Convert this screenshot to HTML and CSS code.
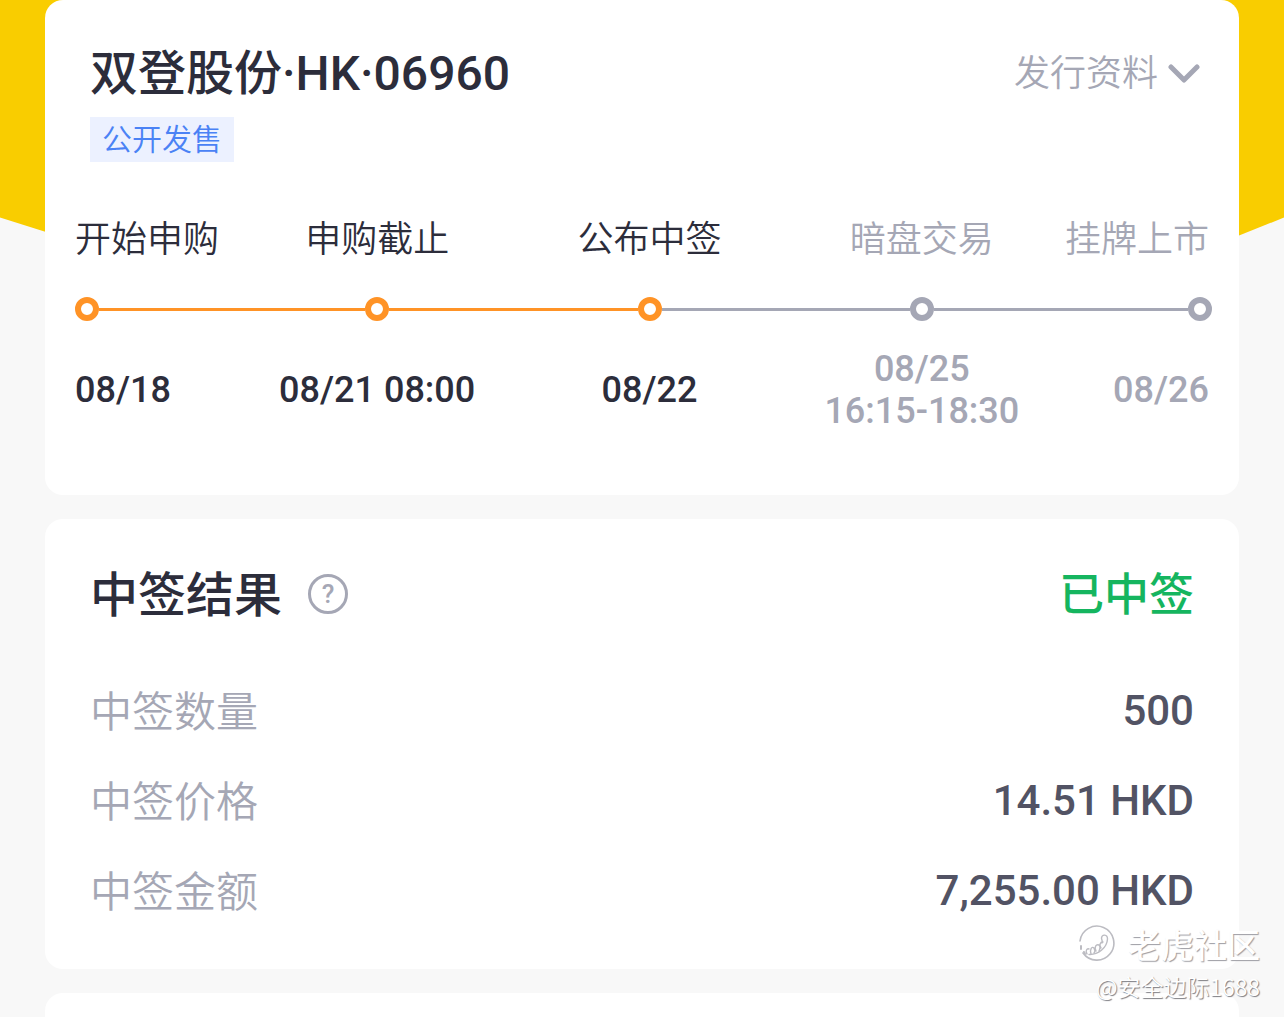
FILE: index.html
```html
<!DOCTYPE html>
<html lang="zh-CN">
<head>
    <meta charset="UTF-8">
    <meta name="viewport" content="width=device-width, initial-scale=1.0">
    <title>双登股份·HK·06960</title>
    <link rel="stylesheet" href="styles.css">
</head>
<body>
    <div class="backdrop"></div>
    <main class="page">
        <section class="card stock">
            <div class="card-head">
                <h1>双登股份·HK·06960</h1>
                <button type="button" class="more">
                    发行资料
                    <svg class="chevron" width="32" height="22" viewBox="0 0 32 22">
                        <path d="M3 4 L16 17 L29 4" fill="none" stroke="currentColor" stroke-width="5" stroke-linecap="round" stroke-linejoin="round"/>
                    </svg>
                </button>
            </div>
            <span class="tag">公开发售</span>

            <ol class="timeline">
                <li class="step done">
                    <span class="step-name">开始申购</span>
                    <span class="track"><i class="dot"></i><i class="line"></i></span>
                    <span class="step-date">08/18</span>
                </li>
                <li class="step done">
                    <span class="step-name">申购截止</span>
                    <span class="track"><i class="line"></i><i class="dot"></i><i class="line"></i></span>
                    <span class="step-date">08/21 08:00</span>
                </li>
                <li class="step done current">
                    <span class="step-name">公布中签</span>
                    <span class="track"><i class="line"></i><i class="dot"></i><i class="line"></i></span>
                    <span class="step-date">08/22</span>
                </li>
                <li class="step">
                    <span class="step-name">暗盘交易</span>
                    <span class="track"><i class="line"></i><i class="dot"></i><i class="line"></i></span>
                    <span class="step-date">08/25<br>16:15-18:30</span>
                </li>
                <li class="step">
                    <span class="step-name">挂牌上市</span>
                    <span class="track"><i class="line"></i><i class="dot"></i></span>
                    <span class="step-date">08/26</span>
                </li>
            </ol>
        </section>

        <section class="card result">
            <div class="card-head">
                <div class="title-group">
                    <h2>中签结果</h2>
                    <button type="button" class="help">?</button>
                </div>
                <strong class="status">已中签</strong>
            </div>
            <dl class="details">
                <div class="row">
                    <dt>中签数量</dt>
                    <dd>500</dd>
                </div>
                <div class="row">
                    <dt>中签价格</dt>
                    <dd>14.51 HKD</dd>
                </div>
                <div class="row">
                    <dt>中签金额</dt>
                    <dd>7,255.00 HKD</dd>
                </div>
            </dl>
        </section>

        <section class="card next"></section>
    </main>

    <div class="watermark">
        <div class="brand">
            <svg class="brand-logo" width="38" height="38" viewBox="0 0 38 38" fill="none" stroke="currentColor" stroke-linecap="round" stroke-linejoin="round">
                <path d="M2 16 A17 17 0 1 1 5 28" stroke-width="1.6"/>
                <path d="M3 21 L3 24 M6 27 L7 29" stroke-width="2"/>
                <path d="M11 29.5 C20 30 29 23 29.500 14 C29.500 9 24 9 23.500 13 C23.500 15 25 16 24 18" stroke-width="1.400"/>
                <path d="M9 29 C7 26 9 23 11 24 M13 29 C11.500 24 14 21 16 23 C17 25 17 27 16 28 M18 26 C16 22 18 19 21 20 C23 22 22 24 21 26 M23 23 C21 20 22 17 25 17" stroke-width="1.400"/>
            </svg>
            <span>老虎社区</span>
        </div>
        <div class="author">@安全边际1688</div>
    </div>
</body>
</html>
```

FILE: styles.css
```css
* {
    box-sizing: border-box;
}
body {
    margin: 0;
    min-height: 100vh;
    background: #f8f8f8;
    color: #2c2d3b;
    font-family: Roboto, "Noto Sans CJK SC", sans-serif;
    overflow: hidden;
}
h1, h2, ol, dl, dd {
    margin: 0;
    padding: 0;
}
button {
    padding: 0;
    border: none;
    background: none;
    color: #a5a7b5;
    font-family: inherit;
    cursor: pointer;
}

/* yellow header shape behind the cards */
.backdrop {
    position: absolute;
    top: 0;
    left: 0;
    right: 0;
    height: 444px;
    background: #f9cd00;
    clip-path: polygon(0 0, 100% 0, 100% 49%, 56% 100%, 0 49%);
}
.page {
    position: relative;
    display: flex;
    flex-direction: column;
    gap: 24px;
    height: 100vh;
    padding: 0 45px;
}
.card {
    flex-shrink: 0;
    padding: 45px;
    background: white;
    border-radius: 18px;
}
.card-head {
    display: flex;
    justify-content: space-between;
    align-items: center;
}
h1, h2 {
    font-size: 48px;
    line-height: 56px;
    font-weight: 500;
}

/* stock card */
.stock {
    padding: 46px 27px 63px 30px;
}
.stock .card-head {
    padding: 0 12px 0 15px;
}
.more {
    display: flex;
    align-items: center;
    gap: 10px;
    font-size: 36px;
    line-height: 56px;
    font-weight: 350;
}
.tag {
    display: block;
    width: max-content;
    margin: 15px 0 0 15px;
    padding: 0 12px;
    background: #ecf1ff;
    color: #4a82f5;
    font-size: 30px;
    line-height: 45px;
    font-weight: 350;
}

.timeline {
    display: grid;
    grid-template-columns: 166px repeat(3, 1fr) 154px;
    margin-top: 57px;
    list-style: none;
    font-size: 36px;
    line-height: 42px;
}
.step {
    display: flex;
    flex-direction: column;
    color: #a5a7b5;
    text-align: center;
}
.step.done {
    color: #2c2d3b;
}
.step:first-child {
    text-align: left;
}
.step:last-child {
    text-align: right;
}
.step:last-child .step-name,
.step:last-child .step-date {
    padding-right: 3px;
}
.step-name {
    font-weight: 350;
}
.track {
    display: flex;
    align-items: center;
    margin: 36px 0 27px;
}
.dot {
    width: 24px;
    height: 24px;
    border: 6px solid #a5a7b5;
    border-radius: 50%;
}
.line {
    flex: 1;
    height: 3px;
    background: #a5a7b5;
}
.done .dot {
    border-color: #ff9326;
}
.done .line {
    background: #ff9326;
}
.current .dot + .line {
    background: #a5a7b5;
}
.step-date {
    display: flex;
    flex: 1;
    flex-direction: column;
    justify-content: center;
    font-weight: 500;
}

/* result card */
.result {
    padding-bottom: 33px;
}
.title-group {
    display: flex;
    align-items: center;
    gap: 26px;
}
h2, .status {
    padding-top: 4px;
}
.help {
    width: 40px;
    height: 40px;
    border: 3px solid #a5a7b5;
    border-radius: 50%;
    font-size: 26px;
    line-height: 34px;
    font-weight: 500;
}
.status {
    color: #15b55f;
    font-size: 45px;
    line-height: 56px;
    font-weight: 500;
}
.details {
    margin-top: 42px;
}
.row {
    display: flex;
    justify-content: space-between;
    height: 90px;
    font-size: 42px;
    line-height: 90px;
}
dt {
    padding-top: 2px;
    color: #a5a7b5;
    font-weight: 350;
}
dd {
    color: #525364;
    font-weight: 500;
}
.next {
    flex: 1;
    padding: 0;
    border-radius: 18px 18px 0 0;
}

/* watermark over the bottom corner */
.watermark {
    position: absolute;
    right: 24px;
    bottom: 17px;
    display: flex;
    flex-direction: column;
    align-items: flex-end;
    gap: 8px;
    color: white;
    font-family: "Noto Sans CJK SC", sans-serif;
}
.brand {
    display: flex;
    align-items: center;
    gap: 12px;
    font-size: 33px;
    line-height: 40px;
    font-weight: 500;
    text-shadow: 1px 1px 1px #9d9da3;
}
.brand-logo {
    color: #bcbcc2;
}
.author {
    font-size: 23px;
    line-height: 28px;
    font-weight: 350;
    text-shadow: 1px 1px 1px #7b7b80;
}
```
